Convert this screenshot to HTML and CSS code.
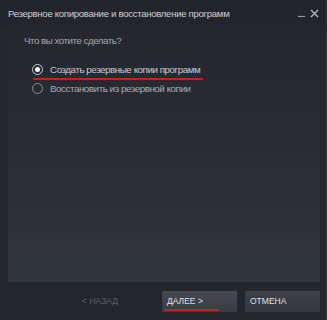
FILE: index.html
```html
<!doctype html>
<html>
<head>
    <title>Резервное копирование</title>
    <link rel="stylesheet" href="styles.css">
</head>

<body>
    <div class="window">
        <div class="titlebar">
            <span class="title">Резервное копирование и восстановление программ</span>
            <span class="controls">
                <svg width="8" height="8" viewBox="0 0 8 8"><path d="M0 7.5H7" stroke="#9a9ea6" stroke-width="1.2"/></svg>
                <svg width="9" height="9" viewBox="0 0 9 9"><path d="M1 1L8 8M8 1L1 8" stroke="#b4b8bf" stroke-width="1.3"/></svg>
            </span>
        </div>
        <div class="panel">
            <p class="question">Что вы хотите сделать?</p>
            <div class="option">
                <span class="radio checked"></span>
                <span class="label underlined">Создать резервные копии программ</span>
            </div>
            <div class="option">
                <span class="radio"></span>
                <span class="label">Восстановить из резервной копии</span>
            </div>
        </div>
        <div class="footer">
            <span class="back">&lt; НАЗАД</span>
            <button class="btn next"><span class="underlined">ДАЛЕЕ &gt;</span></button>
            <button class="btn">ОТМЕНА</button>
        </div>
    </div>
</body>
</html>
```

FILE: styles.css
```css
html, body {
    margin: 0;
    padding: 0;
}
body {
    font-family: "Liberation Sans", Arial, sans-serif;
    background-color: #23262c;
}
.window {
    width: 327px;
    height: 320px;
    background-color: #23262c;
    display: flex;
    flex-direction: column;
    border-right: 1px solid #2c3036;
    box-sizing: border-box;
}
.titlebar {
    height: 26px;
    display: flex;
    align-items: center;
    justify-content: space-between;
    padding: 0 7px 0 8px;
    background-color: #22252b;
}
.title {
    font-size: 9.6px;
    letter-spacing: -0.3px;
    color: #cdd0d4;
}
.controls {
    display: flex;
    gap: 4px;
    align-items: center;
}
.panel {
    margin: 0 6px 0 8px;
    height: 256px;
    background: linear-gradient(#24272e, #2a2d35 55%, #31353e);
    padding: 9px 0 0 16px;
    box-sizing: border-box;
}
.question {
    margin: 0;
    font-size: 9.8px;
    letter-spacing: -0.5px;
    color: #a4a8ae;
}
.option {
    display: flex;
    align-items: center;
    gap: 7px;
    height: 19px;
    padding-left: 8px;
}
.option:first-of-type {
    margin-top: 14px;
}
.radio {
    width: 9px;
    height: 9px;
    border: 1.5px solid #8d9198;
    border-radius: 50%;
    display: flex;
    align-items: center;
    justify-content: center;
    flex-shrink: 0;
}
.radio.checked {
    border-color: #c9ccd0;
}
.radio.checked::after {
    content: "";
    width: 5px;
    height: 5px;
    border-radius: 50%;
    background-color: #ffffff;
}
.label {
    font-size: 9.8px;
    letter-spacing: -0.45px;
    color: #a8acb2;
}
.option:first-of-type .label {
    color: #c6c9ce;
}
.underlined {
    position: relative;
}
.option .underlined::after {
    content: "";
    position: absolute;
    left: -17px;
    right: -3px;
    bottom: -5px;
    height: 2px;
    background-color: #c8202a;
    border-radius: 1px;
}
.footer {
    flex: 1;
    display: flex;
    align-items: center;
    justify-content: flex-end;
    gap: 8px;
    padding: 0 6px 0 0;
}
.back {
    font-size: 8.5px;
    color: #5c6068;
    margin-right: 36px;
}
.btn {
    width: 75px;
    height: 21px;
    border: none;
    border-radius: 1px;
    background: linear-gradient(#454950, #393c43);
    color: #e0e2e5;
    font-family: "Liberation Sans", Arial, sans-serif;
    font-size: 8.5px;
    text-align: left;
    padding: 0 0 0 5px;
}
.btn:last-child {
    background: linear-gradient(#3e4148, #33363c);
}
.btn .underlined::after {
    content: "";
    position: absolute;
    left: -3px;
    right: -17px;
    bottom: -5px;
    height: 2px;
    background-color: #c8202a;
    border-radius: 1px;
}
```
